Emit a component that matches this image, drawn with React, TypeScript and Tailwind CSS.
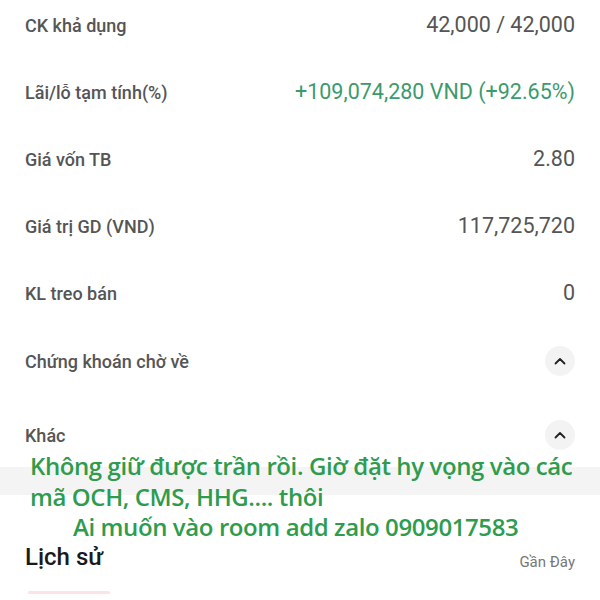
import React from "react";

const rows: { label: string; value: string; green?: boolean }[] = [
  { label: "CK khả dụng", value: "42,000 / 42,000" },
  { label: "Lãi/lỗ tạm tính(%)", value: "+109,074,280 VND (+92.65%)", green: true },
  { label: "Giá vốn TB", value: "2.80" },
  { label: "Giá trị GD (VND)", value: "117,725,720" },
  { label: "KL treo bán", value: "0" },
];

function Chevron() {
  return (
    <div className="flex h-[30px] w-[30px] items-center justify-center rounded-full bg-[#f3f3f3]">
      <svg width="12" height="8" viewBox="0 0 12 8" fill="none">
        <path d="M1.5 6.5 L6 2 L10.5 6.5" stroke="#222" strokeWidth="1.8" strokeLinecap="round" strokeLinejoin="round" />
      </svg>
    </div>
  );
}

export default function App() {
  return (
    <div className="relative h-[600px] w-[600px] overflow-hidden bg-white" style={{ fontFamily: "Roboto, 'Noto Sans', sans-serif" }}>
      <div className="-mt-[8px] flex flex-col">
        {rows.map((r) => (
          <div key={r.label} className="flex h-[67px] items-center justify-between pl-[25px] pr-[25px]">
            <span className="text-[18px] font-medium text-[#555]">{r.label}</span>
            <span className={`text-[21.5px] ${r.green ? "text-[#3c9a6c]" : "text-[#555]"}`}>{r.value}</span>
          </div>
        ))}
        <div className="flex h-[68px] items-center justify-between pl-[25px] pr-[25px]">
          <span className="text-[18px] font-medium text-[#555]">Chứng khoán chờ về</span>
          <Chevron />
        </div>
        <div className="flex h-[72px] items-center justify-between pl-[25px] pr-[25px] pt-[8px]">
          <span className="text-[18px] font-medium text-[#555]">Khác</span>
          <Chevron />
        </div>
        <div className="h-[28px] bg-[#f4f4f4]" />
        <div className="flex items-end justify-between pl-[25px] pr-[25px] pt-[44px]">
          <span className="text-[24px] font-medium text-[#1a1a1a]">Lịch sử</span>
          <span className="pb-[2px] text-[15px] text-[#777]">Gần Đây</span>
        </div>
        <div className="ml-[28px] mt-[16px] h-[3px] w-[82px] rounded bg-[#fbe3e6]" />
      </div>
      <div
        className="absolute left-[30px] top-[451px] text-[24px] font-semibold leading-[30.5px] text-[#2e9c4e]"
        style={{ fontFamily: "'Open Sans', sans-serif", letterSpacing: "-0.4px" }}
      >
        <div>Không giữ được trần rồi. Giờ đặt hy vọng vào các</div>
        <div>mã OCH, CMS, HHG.... thôi</div>
        <div className="pl-[43px]">Ai muốn vào room add zalo 0909017583</div>
      </div>
    </div>
  );
}
